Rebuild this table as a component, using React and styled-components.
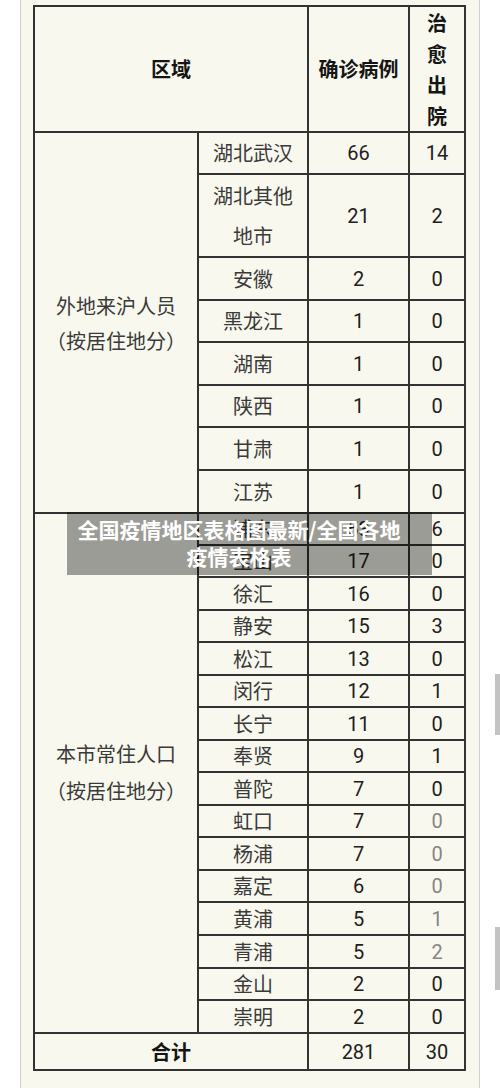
import React from "react";
import styled, { createGlobalStyle } from "styled-components";

const GlobalStyle = createGlobalStyle`
  html, body { margin: 0; padding: 0; background: #ffffff; }
  body {
    font-family: Roboto, "Noto Sans CJK SC", "Noto Sans", sans-serif;
    -webkit-font-smoothing: antialiased;
  }
`;

const Page = styled.div`
  position: relative;
  padding: 0 20px;
  min-height: 1088px;
  box-sizing: border-box;
  overflow: hidden;
`;

const Card = styled.div`
  position: relative;
  box-sizing: border-box;
  min-height: 1088px;
  background: #f8f8ee;
  border-left: 1px solid #cfcfcb;
  border-right: 1px solid #cfcfcb;
  padding: 5px 12px 0;
`;

const Table = styled.div`
  display: grid;
  grid-template-columns: 162px 108px 99px 54px;
  gap: 2px;
  padding: 2px;
  width: fit-content;
  background: #333333;
`;

const Cell = styled.div`
  background: #f8f8ee;
  display: flex;
  align-items: center;
  justify-content: center;
  text-align: center;
  box-sizing: border-box;
  font-family: "Noto Sans CJK SC", sans-serif;
  font-size: 20px;
  line-height: ${(p) => p.$lh || 24}px;
  color: #3a3a3a;
  grid-column: ${(p) => (p.$cols ? `span ${p.$cols}` : "auto")};
  grid-row: ${(p) => (p.$rows ? `span ${p.$rows}` : "auto")};
  padding-bottom: ${(p) => p.$shift || 0}px;
`;

const HeadCell = styled(Cell)`
  font-weight: 700;
  color: #151515;
`;

const NumCell = styled(Cell)`
  font-family: Roboto, "Noto Sans CJK SC", sans-serif;
  color: ${(p) => (p.$muted ? "#858585" : "#202020")};
`;

const Stack = styled.span`
  display: block;
  width: 1em;
`;

const Watermark = styled.div`
  position: absolute;
  left: 46px;
  top: 512px;
  width: 365px;
  height: 63px;
  box-sizing: border-box;
  padding: 0 21px 1px 0;
  display: flex;
  align-items: center;
  justify-content: center;
  text-align: center;
  background: rgba(0, 0, 0, 0.37);
  color: #ffffff;
  font-family: "Noto Sans CJK SC", sans-serif;
  font-weight: 700;
  font-size: 21px;
  line-height: 27px;
`;

const ScrollMark = styled.div`
  position: absolute;
  right: 0;
  width: 5px;
  background: #c3c3c3;
  top: ${(p) => p.$top}px;
  height: ${(p) => p.$h}px;
`;

const outside = [
  ["湖北武汉", "66", "14", 40],
  [["湖北其他", "地市"], "21", "2", 81],
  ["安徽", "2", "0", 41],
  ["黑龙江", "1", "0", 40],
  ["湖南", "1", "0", 41],
  ["陕西", "1", "0", 40],
  ["甘肃", "1", "0", 41],
  ["江苏", "1", "0", 41],
];

const local = [
  ["浦东", "53", "6", 30],
  ["宝山", "17", "0", 30],
  ["徐汇", "16", "0", 31],
  ["静安", "15", "3", 30],
  ["松江", "13", "0", 31],
  ["闵行", "12", "1", 30],
  ["长宁", "11", "0", 31],
  ["奉贤", "9", "1", 30],
  ["普陀", "7", "0", 31],
  ["虹口", "7", "0", 30, true],
  ["杨浦", "7", "0", 31, true],
  ["嘉定", "6", "0", 30, true],
  ["黄浦", "5", "1", 31, true],
  ["青浦", "5", "2", 31, true],
  ["金山", "2", "0", 30],
  ["崇明", "2", "0", 31],
];

const rowsTemplate = [124, ...outside.map((r) => r[3]), ...local.map((r) => r[3]), 35]
  .map((h) => `${h}px`)
  .join(" ");

function Rows({ data }) {
  return data.map(([name, count, cured, , muted]) => (
    <React.Fragment key={Array.isArray(name) ? name.join("") : name}>
      <Cell $lh={Array.isArray(name) ? 40 : 24}>
        {Array.isArray(name) ? (
          <span>
            {name[0]}
            <br />
            {name[1]}
          </span>
        ) : (
          name
        )}
      </Cell>
      <NumCell>{count}</NumCell>
      <NumCell $muted={muted}>{cured}</NumCell>
    </React.Fragment>
  ));
}

export default function App() {
  return (
    <>
      <GlobalStyle />
      <Page>
        <Card>
          <Table style={{ gridTemplateRows: rowsTemplate }}>
            <HeadCell $cols={2}>区域</HeadCell>
            <HeadCell>确诊病例</HeadCell>
            <HeadCell $lh={31}>
              <Stack>治愈出院</Stack>
            </HeadCell>

            <Cell $rows={outside.length} $lh={35}>
              <span>
                外地来沪人员
                <br />
                （按居住地分）
              </span>
            </Cell>
            <Rows data={outside} />

            <Cell $rows={local.length} $lh={37} $shift={3}>
              <span>
                本市常住人口
                <br />
                （按居住地分）
              </span>
            </Cell>
            <Rows data={local} />

            <HeadCell $cols={2}>合计</HeadCell>
            <NumCell>281</NumCell>
            <NumCell>30</NumCell>
          </Table>
          <Watermark>
            <span>
              全国疫情地区表格图最新/全国各地
              <br />
              疫情表格表
            </span>
          </Watermark>
        </Card>
        <ScrollMark $top={674} $h={61} />
        <ScrollMark $top={927} $h={63} />
      </Page>
    </>
  );
}
